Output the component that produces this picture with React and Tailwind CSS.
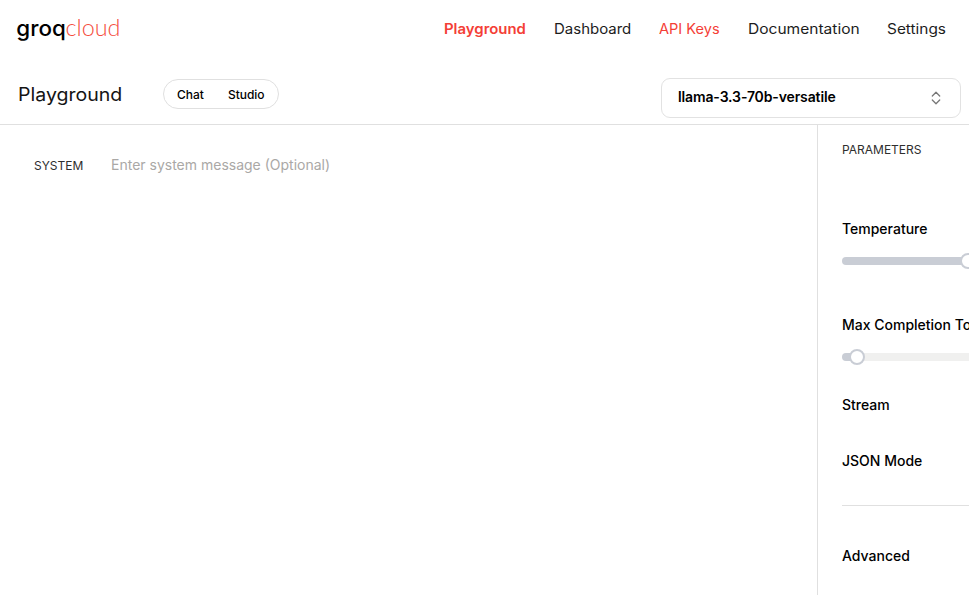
import React from 'react';

const navItems = [
  { label: 'Playground', width: 'w-[82px]', style: 'font-semibold text-[#f43e36] scale-x-[1.065]' },
  { label: 'Dashboard', width: 'w-[77px]', style: 'text-[#1c1c1c] scale-x-[1.07]' },
  { label: 'API Keys', width: 'w-[61px]', style: 'text-[#f43e36] scale-x-[1.04]' },
  { label: 'Documentation', width: 'w-[111px]', style: 'text-[#1c1c1c] scale-x-[1.11]' },
  { label: 'Settings', width: 'w-[58px]', style: 'text-[#1c1c1c] scale-x-[1.1]' },
];

function Logo() {
  return (
    <svg width="106" height="32" viewBox="0 0 106 32" role="img" aria-label="groqcloud">
      <text x="0.3" y="23" textLength="49.5" lengthAdjust="spacingAndGlyphs" fontFamily="Inter, sans-serif" fontSize="21.5" fontWeight="500" fill="#000">groq</text>
      <text x="49.5" y="22.5" textLength="55" lengthAdjust="spacingAndGlyphs" fontFamily="Lato, sans-serif" fontSize="24" fontWeight="300" fill="#f54e40">cloud</text>
    </svg>
  );
}

function Header() {
  return (
    <header className="flex h-[58px] items-center justify-between pl-4 pr-[24.5px]">
      <Logo />
      <nav className="flex gap-7 text-[14px] leading-5">
        {navItems.map((item) => (
          <a key={item.label} className={`whitespace-nowrap ${item.width}`}>
            <span className={`inline-block origin-left ${item.style}`}>{item.label}</span>
          </a>
        ))}
      </nav>
    </header>
  );
}

function Toolbar() {
  return (
    <div className="flex h-[67px] items-center justify-between border-b border-[#e0e0e0] pl-[18px] pr-2">
      <div className="flex items-center pt-1.5">
        <h1 className="w-[145px] pt-0.5 text-[18px] leading-6 text-[#141414]">
          <span className="inline-block origin-left scale-x-[1.085]">Playground</span>
        </h1>
        <div className="flex h-[30px] w-[116px] items-center justify-between rounded-full border border-[#e0e0e0] pl-[13px] pr-[13.5px] pt-0.5 text-[12px] font-medium tracking-[-0.05px] text-black">
          <span>Chat</span>
          <span>Studio</span>
        </div>
      </div>
      <button className="mt-[14px] flex h-10 w-[300px] items-center justify-between rounded-[9px] border border-[#e2e2e2] pl-4 pr-4 text-[14px] font-semibold tracking-[-0.13px] text-black">
        <span className="-mt-[3px]">llama-3.3-70b-versatile</span>
        <svg width="16" height="16" viewBox="0 0 16 16" fill="none" stroke="#777" strokeWidth="1.3" strokeLinecap="round" strokeLinejoin="round">
          <path d="M4.3 6 8 2.3 11.7 6M4.3 10 8 13.7 11.7 10" />
        </svg>
      </button>
    </div>
  );
}

function Slider({ filled }) {
  return (
    <div className="flex h-4 w-[264px] items-center">
      <div className="-mr-2 h-2 rounded-l-full bg-[#c9cdd5]" style={{ width: filled }} />
      <div className="z-10 h-4 w-4 shrink-0 rounded-full border-2 border-[#c9cdd5] bg-white" />
      <div className="-ml-2 h-2 flex-1 rounded-r-full bg-[#f0f0ef]" />
    </div>
  );
}

function Parameters() {
  return (
    <aside className="flex w-[152px] shrink-0 flex-col overflow-hidden whitespace-nowrap border-l border-[#e0e0e0] pl-6 text-[14px] font-medium leading-5 text-black">
      <h2 className="mt-[15px] text-[12px] font-normal text-[#2e2e2e]">PARAMETERS</h2>
      <div className="mt-[59px]">Temperature</div>
      <div className="mt-3.5"><Slider filled={126} /></div>
      <div className="mt-[46px]">Max Completion Tokens</div>
      <div className="mt-3.5"><Slider filled={15} /></div>
      <div className="mt-[30px]">Stream</div>
      <div className="mt-9">JSON Mode</div>
      <div className="mt-[34px] w-[264px] border-t border-[#e0e0e0]" />
      <div className="mt-10">Advanced</div>
    </aside>
  );
}

export default function App() {
  return (
    <div className="flex h-[595px] w-[969px] flex-col overflow-hidden bg-white font-['Inter',sans-serif]">
      <Header />
      <Toolbar />
      <div className="flex min-h-0 flex-1">
        <main className="flex flex-1 items-start pl-[34px] pt-[30px]">
          <span className="w-[77px] pt-px text-[12px] leading-5 text-[#2e2e2e]">SYSTEM</span>
          <span className="text-[14px] leading-5 text-[#aaa8a6]">Enter system message (Optional)</span>
        </main>
        <Parameters />
      </div>
    </div>
  );
}
